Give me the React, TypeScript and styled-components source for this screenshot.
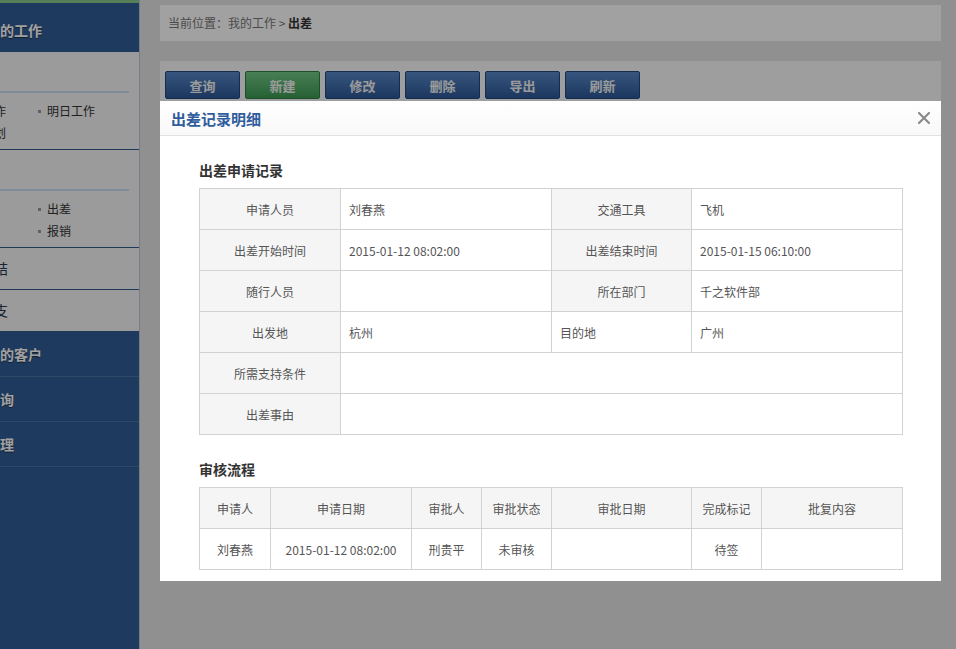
import styled, { createGlobalStyle } from 'styled-components';

const GlobalStyle = createGlobalStyle`
  html, body {
    margin: 0;
    padding: 0;
    height: 100%;
  }
  body {
    font-family: "Noto Sans CJK SC", "Liberation Sans", sans-serif;
    font-size: 12px;
    overflow: hidden;
  }
  #root { height: 100%; }
`;

// ── data ─────────────────────────────────────────────
const menuSections = [
  { title: '日程', items: ['今日工作', '明日工作', '工作计划'] },
  { title: '行政', items: ['请假', '出差', '加班', '报销'] },
];
const collapsedMenus = ['总结', '收支'];
const topMenus = ['我的客户', '查询', '管理'];

const tools = [
  { label: '查询' },
  { label: '新建', green: true },
  { label: '修改' },
  { label: '删除' },
  { label: '导出' },
  { label: '刷新' },
];

const flowHead = ['申请人', '申请日期', '审批人', '审批状态', '审批日期', '完成标记', '批复内容'];
const flowRow = ['刘春燕', '2015-01-12 08:02:00', '刑贵平', '未审核', '', '待签', ''];
const flowCols = [71, 141, 70, 70, 140, 70, 141];

// ── layout ───────────────────────────────────────────
const Page = styled.div`
  display: flex;
  height: 100vh;
  overflow: hidden;
`;

const Sidebar = styled.aside`
  flex: none;
  width: 140px;
  height: 100%;
  overflow: hidden;
  background: #315c97;
  box-shadow: inset -1px 0 0 #b8c6d8;
`;

const SideInner = styled.div`
  margin-left: -60px;
  width: 199px;
`;

const SideHeader = styled.div`
  border-top: 3px solid #86c98a;
  height: 44px;
  padding: 5px 0 0 46px;
  line-height: 44px;
  color: #fff;
  font-size: 14px;
  font-weight: bold;
  text-shadow: 0 1px 1px rgba(0, 0, 0, 0.5);
`;

const Section = styled.div`
  background: #f5f5f5;
  border-bottom: 1px solid #345a8a;
`;

const SectionHeading = styled.div`
  height: 39px;
  line-height: 39px;
  padding-left: 22px;
  margin-right: 10px;
  color: #555;
  border-bottom: 2px solid #c8dcf5;
`;

const ItemGrid = styled.ul`
  list-style: none;
  margin: 0;
  display: grid;
  grid-template-columns: 89px 89px;
  padding: 7px 0 5px 9px;
`;

const Item = styled.li`
  display: flex;
  align-items: center;
  gap: 6px;
  line-height: 22px;
  color: #333;
  font-size: 12px;

  &::before {
    content: '';
    width: 3px;
    height: 3px;
    background: #999;
  }
`;

const CollapsedRow = styled.div`
  height: 41px;
  line-height: 41px;
  padding-left: 40px;
  background: #f5f5f5;
  border-bottom: 1px solid #345a8a;
  color: #2a3650;
  font-size: 14px;
`;

const BlueRow = styled.div`
  height: 44px;
  line-height: 44px;
  padding-left: 46px;
  border-bottom: 1px solid #4a72a4;
  color: #fff;
  font-size: 14px;
  font-weight: bold;
  text-shadow: 0 1px 1px rgba(0, 0, 0, 0.5);
`;

const Main = styled.main`
  flex: 1;
  background: #e4e4e4;
  padding: 5px 15px 0 20px;
`;

const Breadcrumb = styled.div`
  height: 36px;
  line-height: 36px;
  padding-left: 8px;
  background: #fff;
  color: #777;

  b { color: #333; }
`;

const ToolPanel = styled.div`
  margin-top: 20px;
  min-height: 300px;
  padding: 10px 5px;
  background: #fafafa;
`;

const ToolRow = styled.div`
  display: flex;
  gap: 5px;
`;

const ToolButton = styled.button<{ $green?: boolean }>`
  width: 75px;
  height: 28px;
  padding: 0;
  border-radius: 2px;
  border: 1px solid ${p => (p.$green ? '#2e7d43' : '#22467c')};
  background: ${p =>
    p.$green
      ? 'linear-gradient(#72c985, #3c9a54)'
      : 'linear-gradient(#5887c8, #2c5896)'};
  color: #f4f4f4;
  font-family: inherit;
  font-size: 13px;
  font-weight: bold;
`;

// ── modal ────────────────────────────────────────────
const Overlay = styled.div`
  position: fixed;
  inset: 0;
  background: rgba(0, 0, 0, 0.37);
  z-index: 10;
`;

const Modal = styled.div`
  position: fixed;
  left: 160px;
  top: 101px;
  width: 781px;
  background: #fff;
  z-index: 11;
`;

const ModalHeader = styled.div`
  height: 34px;
  display: flex;
  align-items: center;
  justify-content: space-between;
  padding: 0 10px 0 11px;
  border-bottom: 1px solid #e2e2e2;
  background: linear-gradient(#fff, #f8f8f8);
`;

const ModalTitle = styled.h2`
  margin: 0;
  font-size: 15px;
  font-weight: bold;
  color: #2f5d9e;
`;

const CloseButton = styled.button`
  border: 0;
  background: none;
  padding: 0;
  width: 14px;
  height: 14px;
  display: flex;
`;

const ModalBody = styled.div`
  padding: 24px 39px 11px;
`;

const BlockTitle = styled.h3<{ $gap?: boolean }>`
  margin: ${p => (p.$gap ? '24px' : '0')} 0 8px;
  font-size: 14px;
  line-height: 20px;
  font-weight: bold;
  color: #333;
`;

const Table = styled.table`
  width: 703px;
  border-collapse: collapse;
  table-layout: fixed;

  td, th {
    border: 1px solid #d2d2d2;
    height: 41px;
    padding: 0 8px;
    font-size: 12px;
    font-weight: normal;
    color: #555;
    box-sizing: border-box;
  }
`;

const LabelCell = styled.th`
  background: #f5f5f5;
  text-align: center;
`;

const ValueCell = styled.td<{ $center?: boolean }>`
  text-align: ${p => (p.$center ? 'center' : 'left')};
`;

const CloseIcon = () => (
  <svg width="14" height="14" viewBox="0 0 14 14">
    <path d="M2 2 L12 12 M12 2 L2 12" stroke="#8a8a8a" strokeWidth="2.2" strokeLinecap="round" />
  </svg>
);

export default function App() {
  return (
    <>
      <GlobalStyle />
      <Page>
        <Sidebar>
          <SideInner>
            <SideHeader>我的工作</SideHeader>
            {menuSections.map(sec => (
              <Section key={sec.title}>
                <SectionHeading>{sec.title}</SectionHeading>
                <ItemGrid>
                  {sec.items.map(it => (
                    <Item key={it}>{it}</Item>
                  ))}
                </ItemGrid>
              </Section>
            ))}
            {collapsedMenus.map(m => (
              <CollapsedRow key={m}>{m}</CollapsedRow>
            ))}
            {topMenus.map(m => (
              <BlueRow key={m}>{m}</BlueRow>
            ))}
          </SideInner>
        </Sidebar>

        <Main>
          <Breadcrumb>
            当前位置：我的工作 &gt; <b>出差</b>
          </Breadcrumb>
          <ToolPanel>
            <ToolRow>
              {tools.map(t => (
                <ToolButton key={t.label} $green={t.green}>
                  {t.label}
                </ToolButton>
              ))}
            </ToolRow>
          </ToolPanel>
        </Main>
      </Page>

      <Overlay />
      <Modal>
        <ModalHeader>
          <ModalTitle>出差记录明细</ModalTitle>
          <CloseButton aria-label="关闭">
            <CloseIcon />
          </CloseButton>
        </ModalHeader>
        <ModalBody>
          <BlockTitle>出差申请记录</BlockTitle>
          <Table>
            <colgroup>
              <col style={{ width: 141 }} />
              <col style={{ width: 211 }} />
              <col style={{ width: 140 }} />
              <col style={{ width: 211 }} />
            </colgroup>
            <tbody>
              <tr>
                <LabelCell>申请人员</LabelCell>
                <ValueCell>刘春燕</ValueCell>
                <LabelCell>交通工具</LabelCell>
                <ValueCell>飞机</ValueCell>
              </tr>
              <tr>
                <LabelCell>出差开始时间</LabelCell>
                <ValueCell>2015-01-12 08:02:00</ValueCell>
                <LabelCell>出差结束时间</LabelCell>
                <ValueCell>2015-01-15 06:10:00</ValueCell>
              </tr>
              <tr>
                <LabelCell>随行人员</LabelCell>
                <ValueCell></ValueCell>
                <LabelCell>所在部门</LabelCell>
                <ValueCell>千之软件部</ValueCell>
              </tr>
              <tr>
                <LabelCell>出发地</LabelCell>
                <ValueCell>杭州</ValueCell>
                <ValueCell>目的地</ValueCell>
                <ValueCell>广州</ValueCell>
              </tr>
              <tr>
                <LabelCell>所需支持条件</LabelCell>
                <ValueCell colSpan={3}></ValueCell>
              </tr>
              <tr>
                <LabelCell>出差事由</LabelCell>
                <ValueCell colSpan={3}></ValueCell>
              </tr>
            </tbody>
          </Table>

          <BlockTitle $gap>审核流程</BlockTitle>
          <Table>
            <colgroup>
              {flowCols.map((w, i) => (
                <col key={i} style={{ width: w }} />
              ))}
            </colgroup>
            <tbody>
              <tr>
                {flowHead.map(h => (
                  <LabelCell key={h}>{h}</LabelCell>
                ))}
              </tr>
              <tr>
                {flowRow.map((v, i) => (
                  <ValueCell key={i} $center>
                    {v}
                  </ValueCell>
                ))}
              </tr>
            </tbody>
          </Table>
        </ModalBody>
      </Modal>
    </>
  );
}
